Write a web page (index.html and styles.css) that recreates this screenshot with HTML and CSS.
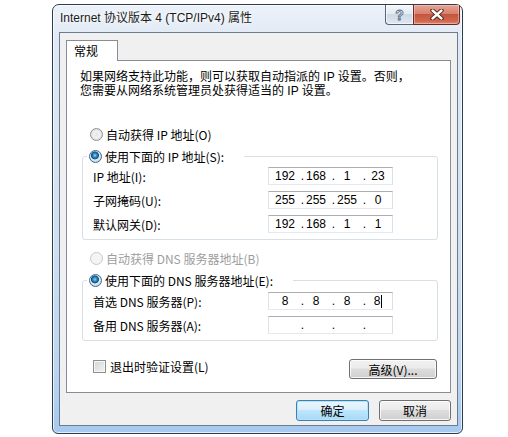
FILE: index.html
```html
<!DOCTYPE html>
<html lang="zh-CN">
<head>
    <meta charset="UTF-8">
    <meta name="viewport" content="width=device-width, initial-scale=1.0">
    <title>Internet 协议版本 4 (TCP/IPv4) 属性</title>
    <link rel="stylesheet" href="styles.css">
</head>
<body>
    <div class="window">
        <div class="titlebar">
            <span class="title">Internet 协议版本 4 (TCP/IPv4) 属性</span>
            <div class="caption-buttons">
                <button type="button" class="cap-btn help">?</button>
                <button type="button" class="cap-btn close">
                    <svg width="14" height="11" viewBox="0 0 14 11">
                        <path d="M2.5 1.5 L11.5 9.5 M11.5 1.5 L2.5 9.5" stroke="#3b1710" stroke-width="4.2" stroke-linecap="round" fill="none"/>
                        <path d="M2.5 1.5 L11.5 9.5 M11.5 1.5 L2.5 9.5" stroke="#ffffff" stroke-width="2.4" stroke-linecap="round" fill="none"/>
                    </svg>
                </button>
            </div>
        </div>

        <div class="client">
            <div class="tabs">
                <div class="tab active">常规</div>
            </div>

            <div class="panel">
                <p class="intro">如果网络支持此功能，则可以获取自动指派的 IP 设置。否则，<br>您需要从网络系统管理员处获得适当的 IP 设置。</p>

                <label class="radio-row first"><span class="radio"></span>自动获得 IP 地址(O)</label>

                <fieldset class="group">
                    <legend><span class="radio checked"></span>使用下面的 IP 地址(S):</legend>
                    <div class="field-row">
                        <span class="label">IP 地址(I):</span>
                        <div class="ip">
                            <span class="oct">192</span><span class="dot">.</span><span class="oct">168</span><span class="dot">.</span><span class="oct">1</span><span class="dot">.</span><span class="oct">23</span>
                        </div>
                    </div>
                    <div class="field-row">
                        <span class="label">子网掩码(U):</span>
                        <div class="ip">
                            <span class="oct">255</span><span class="dot">.</span><span class="oct">255</span><span class="dot">.</span><span class="oct">255</span><span class="dot">.</span><span class="oct">0</span>
                        </div>
                    </div>
                    <div class="field-row">
                        <span class="label">默认网关(D):</span>
                        <div class="ip">
                            <span class="oct">192</span><span class="dot">.</span><span class="oct">168</span><span class="dot">.</span><span class="oct">1</span><span class="dot">.</span><span class="oct">1</span>
                        </div>
                    </div>
                </fieldset>

                <label class="radio-row disabled"><span class="radio"></span>自动获得 DNS 服务器地址(B)</label>

                <fieldset class="group dns">
                    <legend><span class="radio checked"></span>使用下面的 DNS 服务器地址(E):</legend>
                    <div class="field-row">
                        <span class="label">首选 DNS 服务器(P):</span>
                        <div class="ip">
                            <span class="oct">8</span><span class="dot">.</span><span class="oct">8</span><span class="dot">.</span><span class="oct">8</span><span class="dot">.</span><span class="oct">8<span class="caret"></span></span>
                        </div>
                    </div>
                    <div class="field-row">
                        <span class="label">备用 DNS 服务器(A):</span>
                        <div class="ip">
                            <span class="oct"></span><span class="dot">.</span><span class="oct"></span><span class="dot">.</span><span class="oct"></span><span class="dot">.</span><span class="oct"></span>
                        </div>
                    </div>
                </fieldset>

                <div class="bottom-row">
                    <label class="check-row"><span class="checkbox"></span>退出时验证设置(L)</label>
                    <button type="button" class="btn advanced">高级(V)...</button>
                </div>
            </div>

            <div class="dialog-buttons">
                <button type="button" class="btn default">确定</button>
                <button type="button" class="btn">取消</button>
            </div>
        </div>
    </div>
</body>
</html>
```

FILE: styles.css
```css
body {
    margin: 0;
    background: #ffffff;
    font-family: "Noto Sans CJK SC", "Liberation Sans", sans-serif;
    font-size: 12px;
    color: #000;
}

/* window frame */
.window {
    margin: 4px 0 0 52px;
    width: 411px;
    height: 430px;
    box-sizing: border-box;
    border: 1px solid #2e3c4d;
    border-radius: 7px 7px 6px 6px;
    background: linear-gradient(180deg, #edf2f9 0%, #dfe9f5 8%, #cfe0f2 55%, #bcd5f0 85%, #a6c9ee 100%);
    box-shadow: inset 0 0 0 1px rgba(255, 255, 255, 0.7);
    padding: 0 4px 7px 6px;
    display: flex;
    flex-direction: column;
}

.titlebar {
    height: 27px;
    margin: 0 -4px 0 -6px;
    display: flex;
    justify-content: space-between;
    align-items: flex-start;
}

.title {
    padding: 5px 0 0 7px;
    line-height: 17px;
    font-family: "Liberation Sans", "Noto Sans CJK SC", sans-serif;
    font-size: 12px;
    color: #1a1a1a;
    text-shadow: 0 0 6px #ffffff, 0 0 3px #ffffff;
}

.caption-buttons {
    display: flex;
    margin-right: 2px;
}

.cap-btn {
    height: 20px;
    margin: 0;
    padding: 0;
    border: 1px solid #54657a;
    border-top: none;
    display: flex;
    align-items: center;
    justify-content: center;
    cursor: default;
}

.cap-btn.help {
    width: 28px;
    border-radius: 0 0 0 4px;
    border-right: none;
    background: linear-gradient(180deg, #f4f7fb 0%, #e4ebf3 45%, #ced9e6 50%, #dfe7f0 100%);
    box-shadow: inset 0 0 0 1px rgba(255, 255, 255, 0.6);
    font-family: "Liberation Sans", sans-serif;
    font-size: 14px;
    font-weight: bold;
    color: #dfe6ee;
    -webkit-text-stroke: 0.8px #56677c;
}

.cap-btn.close {
    width: 47px;
    border-color: #6a2a22;
    border-radius: 0 0 4px 0;
    background: linear-gradient(180deg, #e8a493 0%, #d7826f 45%, #c5553f 50%, #d0674f 85%, #e08d70 100%);
    box-shadow: inset 0 0 0 1px rgba(255, 220, 210, 0.45);
}

/* client area */
.client {
    flex: 1;
    border: 1px solid #6c7c8f;
    background: #f0f0f0;
    padding: 7px 0 0 6px;
}

.tabs {
    display: flex;
}

.tab {
    position: relative;
    z-index: 1;
    height: 20px;
    line-height: 20px;
    padding: 0 19px 0 7px;
    border: 1px solid #898c95;
    border-bottom: none;
    background: #ffffff;
    margin-bottom: -1px;
}

.panel {
    width: 385px;
    height: 333px;
    box-sizing: border-box;
    border: 1px solid #898c95;
    background: #ffffff;
    padding: 0 12px 0 13px;
}

.intro {
    margin: 10px 0 0;
    font-family: "Liberation Sans", "Noto Sans CJK SC", sans-serif;
    font-size: 12px;
    line-height: 13.5px;
    white-space: nowrap;
}

/* radios and checkbox */
.radio-row {
    height: 16px;
    display: flex;
    align-items: center;
    padding-left: 10px;
    margin-top: 10px;
}

.radio-row.first {
    margin-top: 28px;
}

.radio-row.disabled {
    color: #9d9d9d;
}

.radio {
    width: 13px;
    height: 13px;
    box-sizing: border-box;
    border-radius: 50%;
    border: 1px solid #929292;
    background: radial-gradient(circle at 50% 50%, #e2e2e2 0, #f2f2f2 3px, #dadada 6px);
    margin-right: 3px;
    flex-shrink: 0;
}

.radio.checked {
    border-color: #3d6b8f;
    background: radial-gradient(circle at 45% 40%, #8fd6fb 0, #2a87c6 2px, #11507f 3.6px, #e9eef3 4.4px, #cfd9e2 6px);
}

.radio-row.disabled .radio {
    border-color: #c9c9c9;
    background: #f4f4f4;
}

.check-row {
    height: 16px;
    display: flex;
    align-items: center;
    margin-left: 13px;
}

.checkbox {
    width: 13px;
    height: 13px;
    box-sizing: border-box;
    border: 1px solid #8e8f8f;
    background: linear-gradient(135deg, #d4d4d4 0%, #f4f4f4 100%);
    box-shadow: inset 0 0 0 1px #f6f6f6;
    margin-right: 4px;
}

/* group boxes */
.group {
    margin: 6px 0 0 2px;
    width: 356px;
    box-sizing: border-box;
    border: 1px solid #d5dfe5;
    border-radius: 3px;
    padding: 3px 0 6px 10px;
}

.group legend {
    height: 16px;
    display: flex;
    align-items: center;
    margin-left: -6px;
    padding: 0 20px 0 2px;
}

.group.dns {
    padding-top: 4px;
}

.field-row {
    height: 18px;
    display: flex;
    align-items: center;
    margin-bottom: 6px;
}

.field-row:last-child {
    margin-bottom: 0;
}

.label {
    width: 175px;
}

.ip {
    width: 125px;
    height: 18px;
    box-sizing: border-box;
    border: 1px solid;
    border-color: #abadb3 #dbdfe6 #e3e9ef #e2e3ea;
    background: #ffffff;
    display: flex;
    align-items: center;
    padding-left: 4px;
    font-family: "Liberation Sans", sans-serif;
    font-size: 12px;
}

.oct {
    width: 24px;
    text-align: center;
    display: flex;
    justify-content: center;
    align-items: center;
}

.dot {
    width: 7px;
    text-align: right;
}

.caret {
    display: inline-block;
    width: 1px;
    height: 13px;
    background: #000;
    margin-left: 1px;
}

/* buttons */
.bottom-row {
    margin-top: 17px;
    display: flex;
    justify-content: space-between;
    align-items: flex-start;
}

.btn {
    height: 21px;
    box-sizing: border-box;
    border: 1px solid #707070;
    border-radius: 3px;
    background: linear-gradient(180deg, #f2f2f2 0%, #ebebeb 45%, #dddddd 50%, #cfcfcf 100%);
    box-shadow: inset 0 0 0 1px rgba(255, 255, 255, 0.8);
    font-family: "Noto Sans CJK SC", sans-serif;
    font-size: 12px;
    color: #000;
    padding: 0;
    cursor: default;
}

.btn.advanced {
    width: 88px;
    height: 20px;
    margin: 1px 1px 0 0;
}

.dialog-buttons {
    width: 385px;
    margin-top: 7px;
    display: flex;
    justify-content: flex-end;
    gap: 10px;
}

.dialog-buttons .btn {
    width: 72px;
}

.dialog-buttons .btn.default {
    width: 73px;
    border-color: #3c7fb1;
    background: linear-gradient(180deg, #eaf6fd 0%, #d9f0fc 45%, #bee6fd 50%, #a7d9f5 100%);
    box-shadow: inset 0 0 0 1px #b6e3fb;
}
```
